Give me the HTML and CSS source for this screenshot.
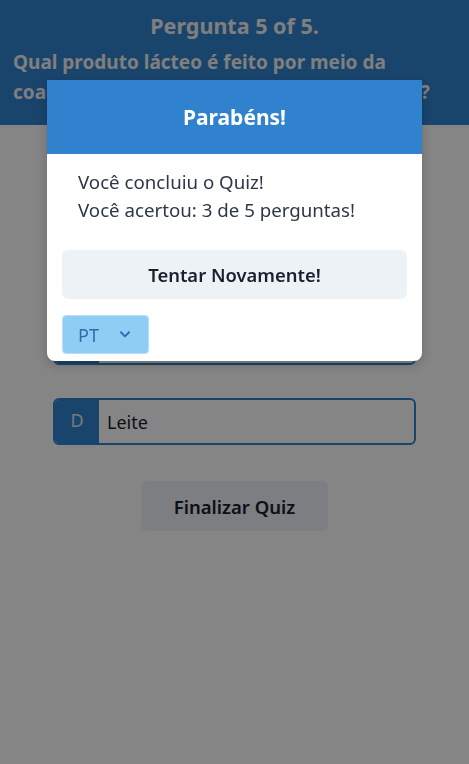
FILE: index.html
```html
<!DOCTYPE html>
<html lang="pt">
<head>
<meta charset="utf-8">
<title>Quiz</title>
<link rel="stylesheet" href="styles.css">
</head>
<body>
<header class="top">
  <h1 class="count">Pergunta 5 of 5.</h1>
  <p class="question">Qual produto lácteo é feito por meio da coagulação do leite com o coalho ou ácidos?</p>
</header>
<main class="quiz">
  <div class="option covered"><span class="letter"></span><span class="answer"></span></div>
  <div class="option covered"><span class="letter"></span><span class="answer"></span></div>
  <div class="option covered"><span class="letter"></span><span class="answer"></span></div>
  <div class="option"><span class="letter">D</span><span class="answer">Leite</span></div>
  <button class="finish">Finalizar Quiz</button>
</main>
<div class="overlay"></div>
<section class="modal">
  <h2 class="modal-head">Parabéns!</h2>
  <div class="modal-body">
    <p>Você concluiu o Quiz!</p>
    <p>Você acertou: 3 de 5 perguntas!</p>
  </div>
  <div class="modal-foot">
    <button class="retry">Tentar Novamente!</button>
    <div class="lang">
      <span>PT</span>
      <svg width="14" height="14" viewBox="0 0 24 24" fill="none" stroke="#2b6cb0" stroke-width="3.2" stroke-linecap="round" stroke-linejoin="round"><path d="M5 9l7 7 7-7"/></svg>
    </div>
  </div>
</section>
</body>
</html>
```
FILE: styles.css
```css
* { box-sizing: border-box; }
html, body { margin: 0; padding: 0; }
body {
  font-family: "Noto Sans", "Open Sans", sans-serif;
  background: #ffffff;
  color: #1a202c;
  width: 469px;
  height: 764px;
  overflow: hidden;
}
.top {
  background: #3182ce;
  height: 125px;
  padding: 10px 13px 0;
}
.count {
  margin: 0;
  text-align: center;
  font-size: 21.5px;
  font-weight: 700;
  line-height: 32px;
  color: #f3f3f3;
}
.question {
  margin: 5px 0 0;
  font-size: 19px;
  font-weight: 700;
  line-height: 30px;
  color: #f3f3f3;
}
.quiz {
  padding: 33px 53px 0 53px;
  display: flex;
  flex-direction: column;
  gap: 33px;
}
.option {
  display: flex;
  height: 47px;
  border: 2px solid #3182ce;
  border-radius: 6px;
  overflow: hidden;
}
.letter {
  width: 44px;
  background: #3182ce;
  color: #e2e8f0;
  font-size: 18px;
  display: flex;
  align-items: center;
  justify-content: center;
  padding-bottom: 4px;
}
.answer {
  display: flex;
  align-items: center;
  padding-left: 8px;
  font-size: 18px;
  color: #1a202c;
}
.finish {
  align-self: center;
  margin-top: 3px;
  width: 187px;
  height: 50px;
  border: 0;
  border-radius: 6px;
  background: #edf2f7;
  font-family: inherit;
  font-size: 18.5px;
  font-weight: 600;
  color: #1a202c;
}
.overlay {
  position: fixed;
  inset: 0;
  background: rgba(0, 0, 0, 0.48);
}
.modal {
  position: fixed;
  top: 80px;
  left: 47px;
  width: 375px;
  background: #ffffff;
  border-radius: 0 0 8px 8px;
  box-shadow: 0 4px 12px rgba(0,0,0,0.2);
  overflow: hidden;
}
.modal-head {
  margin: 0;
  height: 74px;
  background: #3182ce;
  color: #ffffff;
  font-size: 21px;
  font-weight: 700;
  display: flex;
  align-items: center;
  justify-content: center;
}
.modal-body {
  padding: 14px 31px 0;
  font-size: 18.7px;
  color: #2d3748;
}
.modal-body p { margin: 0; line-height: 28px; }
.modal-foot {
  padding: 26px 15px 7px;
  display: flex;
  flex-direction: column;
  align-items: flex-start;
  gap: 16px;
}
.retry {
  width: 100%;
  height: 49px;
  border: 0;
  border-radius: 6px;
  background: #edf2f7;
  font-family: inherit;
  font-size: 18.4px;
  font-weight: 600;
  color: #1a202c;
}
.lang {
  width: 87px;
  height: 39px;
  background: #90cdf4;
  border: 1px solid #b9def8;
  border-radius: 4px;
  display: flex;
  align-items: center;
  gap: 19px;
  padding-left: 15px;
  font-size: 18px;
  color: #2b6cb0;
}
.lang svg { margin-top: -1px; }
```
